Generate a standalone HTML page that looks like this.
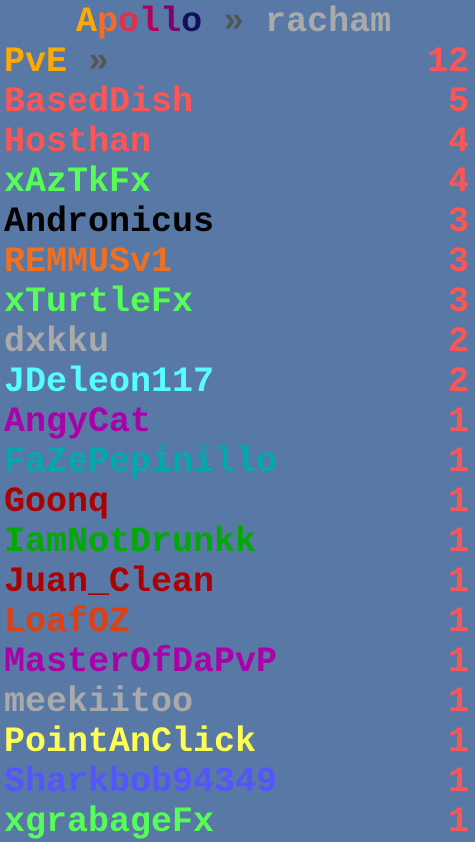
<!DOCTYPE html>
<html><head><meta charset="utf-8"><style>
html,body{margin:0;padding:0;}
body{width:475px;height:842px;background:#5878a5;position:relative;overflow:hidden;font-family:"Liberation Mono",monospace;font-size:35px;font-weight:bold;}
.r{position:absolute;left:0;width:475px;height:40px;line-height:40px;margin-top:2px;}
.n{position:absolute;left:4px;top:0;white-space:pre;}
.s{position:absolute;right:6px;top:0;color:#ff5555;}
</style></head><body>
<div class="r" style="top:0"><span class="n" style="left:76px"><span style="color:#ffaa00">A</span><span style="color:#f76b2a">p</span><span style="color:#e0304a">o</span><span style="color:#b00060">l</span><span style="color:#800070">l</span><span style="color:#10105f">o</span> <span style="color:#555">»</span> <span style="color:#aaa">racham</span></span></div>
<div class="r" style="top:40px"><span class="n" style="color:#ffaa00">PvE <span style="color:#555">»</span></span><span class="s">12</span></div>
<div class="r" style="top:80px"><span class="n" style="color:#ff5555">BasedDish</span><span class="s">5</span></div>
<div class="r" style="top:120px"><span class="n" style="color:#ff5555">Hosthan</span><span class="s">4</span></div>
<div class="r" style="top:160px"><span class="n" style="color:#55ff55">xAzTkFx</span><span class="s">4</span></div>
<div class="r" style="top:200px"><span class="n" style="color:#000">Andronicus</span><span class="s">3</span></div>
<div class="r" style="top:240px"><span class="n" style="color:#f07020">REMMUSv1</span><span class="s">3</span></div>
<div class="r" style="top:280px"><span class="n" style="color:#55ff55">xTurtleFx</span><span class="s">3</span></div>
<div class="r" style="top:320px"><span class="n" style="color:#aaaaaa">dxkku</span><span class="s">2</span></div>
<div class="r" style="top:360px"><span class="n" style="color:#55ffff">JDeleon117</span><span class="s">2</span></div>
<div class="r" style="top:400px"><span class="n" style="color:#aa00aa">AngyCat</span><span class="s">1</span></div>
<div class="r" style="top:440px"><span class="n" style="color:#00aaaa">FaZePepinillo</span><span class="s">1</span></div>
<div class="r" style="top:480px"><span class="n" style="color:#aa0000">Goonq</span><span class="s">1</span></div>
<div class="r" style="top:520px"><span class="n" style="color:#00aa00">IamNotDrunkk</span><span class="s">1</span></div>
<div class="r" style="top:560px"><span class="n" style="color:#aa0000">Juan_Clean</span><span class="s">1</span></div>
<div class="r" style="top:600px"><span class="n" style="color:#e04010">LoafOZ</span><span class="s">1</span></div>
<div class="r" style="top:640px"><span class="n" style="color:#aa00aa">MasterOfDaPvP</span><span class="s">1</span></div>
<div class="r" style="top:680px"><span class="n" style="color:#aaaaaa">meekiitoo</span><span class="s">1</span></div>
<div class="r" style="top:720px"><span class="n" style="color:#ffff55">PointAnClick</span><span class="s">1</span></div>
<div class="r" style="top:760px"><span class="n" style="color:#5555ff">Sharkbob94349</span><span class="s">1</span></div>
<div class="r" style="top:800px"><span class="n" style="color:#55ff55">xgrabageFx</span><span class="s">1</span></div>
</body></html>
